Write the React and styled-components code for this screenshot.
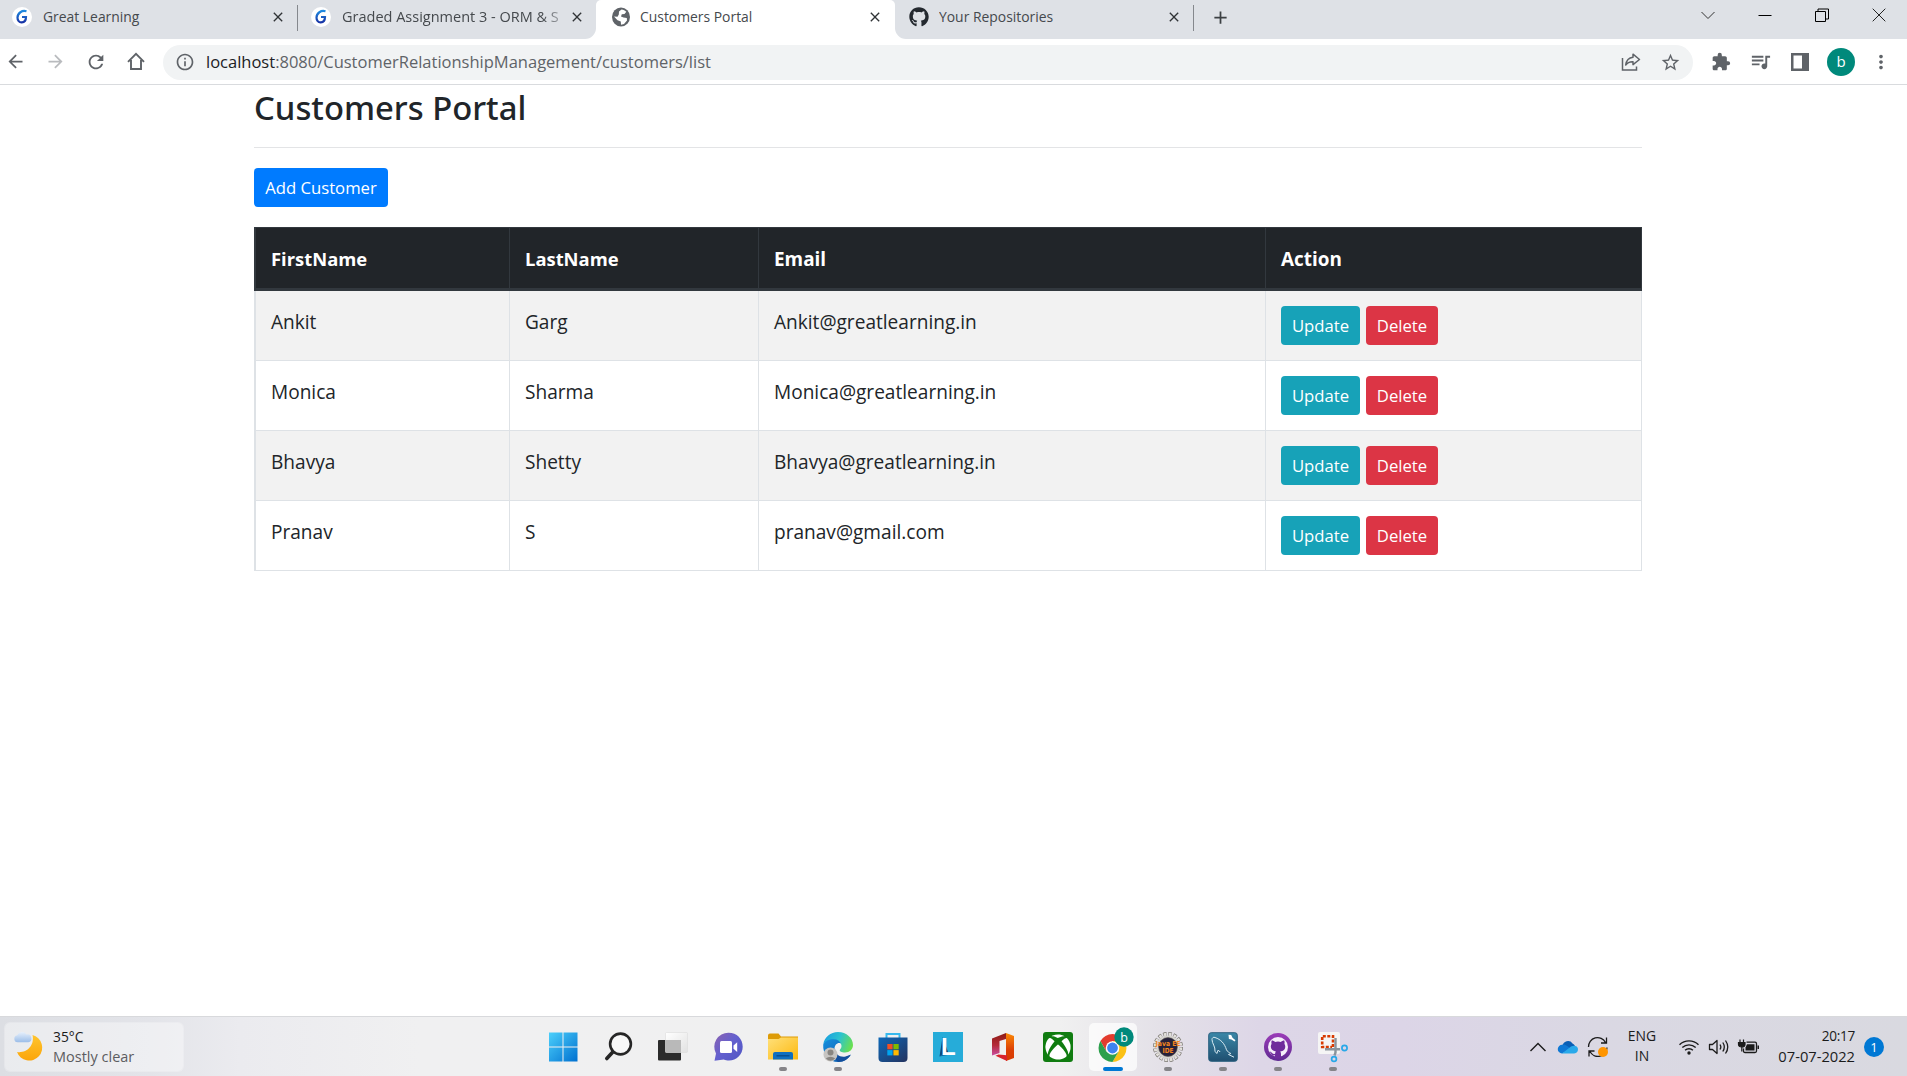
import React from "react";
import styled, { createGlobalStyle } from "styled-components";
import { FaGithub, FaXbox } from "react-icons/fa";
import {
  MdArrowBack, MdArrowForward, MdRefresh, MdInfoOutline, MdStarBorder,
  MdExtension, MdQueueMusic, MdMoreVert, MdClose, MdAdd, MdPublic,
} from "react-icons/md";

const Global = createGlobalStyle`
  * { box-sizing: border-box; }
  html, body { margin: 0; padding: 0; background: #fff; overflow: hidden; }
  body { font-family: "Open Sans", "Noto Sans", sans-serif; color: #212529; }
  svg { display: block; flex: none; overflow: visible; }
`;

const Screen = styled.div`
  width: 1907px;
  height: 1076px;
  display: flex;
  flex-direction: column;
`;

/* ---------- browser chrome ---------- */
const TabStrip = styled.div`
  height: 39px;
  display: flex;
  background: linear-gradient(#dee1e6 0 14px, #fff 14px);
`;
const TabsBefore = styled.div`
  width: 596px;
  display: flex;
  background: #dee1e6;
  border-bottom-right-radius: 11px;
`;
const TabsAfter = styled.div`
  flex: 1;
  display: flex;
  background: #dee1e6;
  border-bottom-left-radius: 11px;
`;
const Tab = styled.div`
  width: ${(p) => p.$w}px;
  height: 34px;
  padding-left: ${(p) => p.$pad}px;
  display: flex;
  align-items: center;
`;
const ActiveTab = styled(Tab)`
  height: 39px;
  padding-bottom: 5px;
  background: #fff;
  border-radius: 5px 5px 0 0;
`;
const Favicon = styled.span`
  width: 20px;
  height: 20px;
  margin-right: ${(p) => p.$gap || 10}px;
  border-radius: 50%;
  display: grid;
  place-items: center;
  background: ${(p) => p.$bg || "transparent"};
  color: ${(p) => p.$fg || "#3c4043"};
`;
const TabTitle = styled.span`
  flex: 1;
  min-width: 0;
  overflow: hidden;
  white-space: nowrap;
  font-size: ${(p) => p.$size || 13.9}px;
  line-height: 20px;
  color: #45494d;
  ${(p) => p.$fade && "mask-image: linear-gradient(90deg, #000 88%, transparent 101%);"}
`;
const TabClose = styled.span`
  width: 16px;
  margin-right: ${(p) => p.$right}px;
  color: #303336;
`;
const TabRule = styled.span`
  width: 1px;
  height: 26px;
  margin-top: 5px;
  background: #85888d;
`;
const NewTab = styled.span`
  margin: 7px 0 0 16px;
  color: #3c4043;
`;
const WindowControls = styled.div`
  margin-left: auto;
  margin-right: 21px;
  height: 29px;
  display: flex;
  align-items: center;
  gap: 43px;
`;

const Toolbar = styled.div`
  height: 46px;
  padding: 0 15px 0 5px;
  display: flex;
  align-items: center;
  border-bottom: 1px solid #d9dbde;
  color: #5f6368;
`;
const NavButtons = styled.div`
  width: 158px;
  display: flex;
  gap: 19px;
`;
const AddressBar = styled.div`
  width: 1530px;
  height: 35px;
  margin-top: 1px;
  padding: 0 12px;
  border-radius: 18px;
  background: #f1f3f4;
  display: flex;
  align-items: center;
`;
const Url = styled.span`
  flex: 1;
  margin-left: 11px;
  font-size: 16.5px;
  line-height: 24px;
  color: #5f6368;
`;
const Host = styled.span`
  color: #202124;
`;
const BarIcons = styled.div`
  display: flex;
  align-items: center;
  gap: 19px;
`;
const Extensions = styled.div`
  margin-left: auto;
  display: flex;
  align-items: center;
  gap: 18px;
`;
const Avatar = styled.span`
  width: 28px;
  height: 28px;
  margin: 0 -3px 0 -1px;
  border-radius: 50%;
  background: #00897b;
  color: #fff;
  font-size: 15px;
  line-height: 27px;
  text-align: center;
`;

/* ---------- portal page ---------- */
const Page = styled.main`
  flex: 1;
  width: 1388px;
  margin-left: 254px;
`;
const Title = styled.h2`
  margin: 2px 0 19px;
  font-family: "Noto Sans", sans-serif;
  font-size: 32.8px;
  line-height: 41px;
  font-weight: 500;
`;
const Rule = styled.hr`
  margin: 0 0 20px;
  border: 0;
  border-top: 1px solid #e3e4e6;
`;
const Button = styled.button`
  height: 39px;
  width: ${(p) => p.$w}px;
  padding: 1px 0 0;
  border: 0;
  border-radius: 4px;
  background: ${(p) => p.$bg};
  color: #fff;
  font-family: inherit;
  font-size: 16.7px;
  line-height: 26px;
`;
const Table = styled.div`
  margin-top: 20px;
  border-left: 2px solid #dee2e6;
  font-size: 19.08px;
  line-height: 32px;
`;
const Row = styled.div`
  height: 70px;
  display: grid;
  grid-template-columns: 254px 249px 507px 376px;
  background: ${(p) => (p.$odd ? "#f2f2f2" : "#fff")};
`;
const Cell = styled.div`
  padding: 15px;
  border-right: 1px solid #dee2e6;
  border-bottom: 1px solid #dee2e6;
  display: flex;
  gap: 6px;
`;
const HeadRow = styled(Row)`
  height: 64px;
  margin-left: -2px;
  border: solid #32383e;
  border-width: 1px 0 3px 2px;
  background: #212529;
`;
const HeadCell = styled(Cell)`
  border-right-color: #32383e;
  border-bottom: 0;
  color: #fff;
  font-weight: 700;
  font-size: ${(p) => p.$size || 18.4}px;
`;

/* ---------- taskbar ---------- */
const Taskbar = styled.footer`
  height: 60px;
  border-top: 1px solid #d8d9dc;
  display: flex;
  align-items: center;
  background: linear-gradient(90deg, #dcdee3 0, #e3e4e9 150px, #ebebef 240px, #f0f0f1 420px, #f0f0f0 1060px,
    #e4e1e8 1160px, #ddd6e7 1260px, #dcd5e7 1400px, #dad8e3 1600px, #d9d9e0 1907px);
`;
const Weather = styled.div`
  width: 178px;
  height: 48px;
  margin-left: 5px;
  padding-left: 8px;
  border-radius: 5px;
  background: rgba(255, 255, 255, 0.4);
  box-shadow: 0 0 0 1px rgba(255, 255, 255, 0.25);
  display: flex;
  align-items: center;
  gap: 10px;
`;
const WeatherText = styled.div`
  font-size: 14.5px;
  line-height: 20px;
  color: #5c5c60;
`;
const Degrees = styled.div`
  color: #1b1b1b;
  font-size: 13.8px;
`;
const Apps = styled.div`
  margin-left: 356px;
  display: flex;
  gap: 7px;
`;
const AppSlot = styled.div`
  width: 48px;
  height: 48px;
  border-radius: 5px;
  background: ${(p) => (p.$active ? "rgba(255,255,255,0.72)" : "transparent")};
  display: grid;
  place-items: center;
  position: relative;
  &::after {
    content: "";
    position: absolute;
    bottom: 0;
    left: 50%;
    transform: translateX(-50%);
    height: 4px;
    border-radius: 2px;
    width: ${(p) => (p.$active ? 20 : p.$open ? 8 : 0)}px;
    background: ${(p) => (p.$active ? "#0078d4" : "#858488")};
  }
`;
const Tray = styled.div`
  margin-left: auto;
  margin-right: 23px;
  display: flex;
  align-items: center;
  color: #1b1b1b;
`;
const TrayIcon = styled.span`
  margin-right: ${(p) => p.$gap}px;
`;
const TrayText = styled.div`
  width: ${(p) => p.$w}px;
  margin-right: ${(p) => p.$gap}px;
  text-align: ${(p) => p.$align};
  font-size: ${(p) => p.$size}px;
  line-height: 20px;
  padding-bottom: 1px;
`;
const Time = styled.div`
  font-size: 13.6px;
  letter-spacing: -0.3px;
`;
const Badge = styled.span`
  width: 20px;
  height: 20px;
  border-radius: 50%;
  background: #0078d4;
  color: #fff;
  font-size: 13px;
  line-height: 20px;
  text-align: center;
`;

/* ---------- drawings ---------- */
const LearningMark = () => (
  <svg width="12" height="16" viewBox="0 0 12 16" fill="none">
    <defs>
      <linearGradient id="gl" x1="0" y1="0" x2="0" y2="1">
        <stop offset="0" stopColor="#1f8ae0" />
        <stop offset="1" stopColor="#1733a6" />
      </linearGradient>
    </defs>
    <path d="M10.5 2.3C6 1 1.6 4 1.5 8.5c-.1 3 1.8 5 4.2 4.900C8.500 13.200 10 11 10 8H6" stroke="url(#gl)" strokeWidth="2.200" />
  </svg>
);
const GlobeIcon = () => (
  <svg width="18" height="20" viewBox="0 0 18 20">
    <ellipse cx="9" cy="10" rx="9" ry="9.500" fill="#5f6368" />
    <path d="M9.500 2.500c2 .2 3.600 1 4.800 2.300L12.500 7l-2.700.3L9 9.500l2.500 1 3.300.5.200 2.500-3 3.500-3 .8-.2-3.300-3.300-1.300L2 9.500l3.500.2 1.300-2.200L7 4.500z" fill="#fff" />
  </svg>
);
const HomeIcon = () => (
  <svg width="20" height="20" viewBox="0 0 20 20" fill="none" stroke="#5f6368" strokeWidth="1.9">
    <path d="M2 10.800 10 2.800l8 8M5 9v9h10V9" />
  </svg>
);
const ShareIcon = () => (
  <svg width="20" height="20" viewBox="0 0 20 20" fill="none" stroke="#5f6368" strokeWidth="1.500">
    <path d="M1.500 6v12h14v-3.500" />
    <path d="M12 2.200 18.500 7.500 12 12.600V9.800c-3.500-.2-5.500.8-7.300 3.200C5.300 8.600 7.600 5.700 12 5.200z" strokeLinejoin="round" />
  </svg>
);
const PanelIcon = () => (
  <svg width="20" height="20" viewBox="0 0 20 20">
    <path fill="#5f6368" fillRule="evenodd" d="M1 1h18v18H1zM3.500 3.500v13H12v-13z" />
  </svg>
);

const WeatherIcon = () => (
  <svg width="30" height="30" viewBox="0 0 30 30">
    <defs>
      <linearGradient id="moon" x1="0" y1="0" x2="0" y2="1">
        <stop offset="0" stopColor="#ffc52e" /><stop offset="1" stopColor="#fba50a" />
      </linearGradient>
      <linearGradient id="cloud" x1="0" y1="0" x2="0" y2="1">
        <stop offset="0" stopColor="#e6f0fc" /><stop offset="1" stopColor="#9bbde8" />
      </linearGradient>
    </defs>
    <path fill="url(#moon)" d="M19.500 3A13 13 0 1 1 4 20C13 21.500 22 14 19.500 3z" />
    <path fill="url(#cloud)" d="M4.500 10.300a3.600 3.600 0 0 1-.3-7.100A5.300 5.300 0 0 1 13.500 2.500a4 4 0 0 1 1.800 7.800z" />
  </svg>
);
const StartIcon = () => (
  <svg width="30" height="30" viewBox="0 0 30 30">
    <defs>
      <linearGradient id="win" x1="0" y1="0" x2="1" y2="1">
        <stop offset="0" stopColor="#4cd0fb" /><stop offset="1" stopColor="#0070d0" />
      </linearGradient>
    </defs>
    <path fill="url(#win)" d="M1 .5h13.500v14H1zM15.500.5H29.500v14h-14zM1 15.500h13.500v14H1zM15.500 15.500h14v14h-14z" />
  </svg>
);
const SearchIcon = () => (
  <svg width="30" height="30" viewBox="0 0 30 30" fill="none" stroke="#262626">
    <circle cx="17.500" cy="12" r="10.400" strokeWidth="2.600" fill="#f8f8f8" />
    <path d="M9.800 20 3.800 26.500" strokeWidth="3.600" strokeLinecap="round" />
  </svg>
);
const TaskViewIcon = () => (
  <svg width="30" height="30" viewBox="0 0 30 30">
    <defs>
      <linearGradient id="tv" x1="0" y1="0" x2="1" y2="1">
        <stop offset="0" stopColor="#fff" /><stop offset="1" stopColor="#e2e2e2" />
      </linearGradient>
    </defs>
    <rect x="0" y="8" width="23" height="20.500" rx="1" fill="#2b2b2b" />
    <rect x="7.500" y=".5" width="22" height="20" rx="1" fill="url(#tv)" stroke="#dcdcdc" strokeWidth=".6" />
    <path d="M7.500 8H23v12.500H7.500z" fill="#b9b9b9" />
  </svg>
);
const ChatIcon = () => (
  <svg width="30" height="30" viewBox="0 0 30 30">
    <defs>
      <linearGradient id="chat" x1="0" y1="0" x2="1" y2=".9">
        <stop offset="0" stopColor="#8c62b0" /><stop offset=".5" stopColor="#6360cf" /><stop offset="1" stopColor="#5257c4" />
      </linearGradient>
    </defs>
    <path fill="url(#chat)" d="M15.500.8C24 .8 29.700 7 29.700 14.800S23.500 28.500 16 28.500c-2 0-3.600-.3-5.200-1L1.500 28.700 3 21.500A14 14 0 0 1 15.500.8z" />
    <rect x="7" y="9" width="12" height="12" rx="1.500" fill="#fff" />
    <path d="m20.500 13.500 3.700-3.200v9.700l-3.700-3.200z" fill="#fff" />
  </svg>
);
const FolderIcon = () => (
  <svg width="30" height="30" viewBox="0 0 30 30">
    <defs>
      <linearGradient id="fold" x1="0" y1="0" x2="1" y2="1">
        <stop offset="0" stopColor="#ffe07a" /><stop offset="1" stopColor="#fdb90f" />
      </linearGradient>
    </defs>
    <path d="M0 3.500q0-2 2-2h8.500L13 4.500h17V12H0z" fill="#dd9b07" />
    <path d="M0 7h10.500L13 5.500h17v22H0z" fill="url(#fold)" />
    <path d="M5 27.500V22q0-2 2-2h16q2 0 2 2v5.500z" fill="#0f6fbf" />
    <path d="M8.500 23.800h13" stroke="#064a88" strokeWidth="1.300" />
  </svg>
);
const EdgeIcon = () => (
  <svg width="30" height="30" viewBox="0 0 30 30">
    <defs>
      <linearGradient id="e1" x1="0" y1=".3" x2="1" y2=".6">
        <stop offset="0" stopColor="#1a9fe0" /><stop offset=".5" stopColor="#2cc3cf" /><stop offset="1" stopColor="#6be04d" />
      </linearGradient>
      <linearGradient id="e2" x1="0" y1="0" x2="1" y2="1">
        <stop offset="0" stopColor="#1590df" /><stop offset="1" stopColor="#0d55a8" />
      </linearGradient>
    </defs>
    <path fill="url(#e1)" d="M.3 12C1.500 5 7.500 0 15 0c8.500 0 15 6 15 13 0 4.500-3.500 7.500-8 7.500-3.500 0-5.700-1.300-5.200-2.500.4-.9 1.700-1.700 1.700-4 0-3.300-3.700-6-8-6-4 0-7.600 1.500-10.200 4z" />
    <path fill="url(#e2)" d="M.2 12.500C2 9 6 7.200 10.500 7.200c4 0 6.500 2 7.500 4.300-3-1.400-6.500.8-6.500 5.500 0 5.500 5 9.500 10.500 8.500l5.800-2.700C25 27.500 20.500 30 15 30 6.500 30-.5 22.500.2 12.500z" />
    <path fill="#124f9d" d="M12 17c0 5 5 8.800 10.500 7.500 2-.4 4-1.300 5.300-2-2.300 4.500-7 7.500-12.300 7.500-4-2.500-6-7.500-3.500-13z" />
    <circle cx="7.500" cy="22.500" r="7" fill="#c6c4c1" />
    <circle cx="7.500" cy="20.500" r="3" fill="#888581" />
    <path d="M2.800 26.300q4.700-3 9.400 0-4.700 5-9.400 0z" fill="#888581" />
  </svg>
);
const StoreIcon = () => (
  <svg width="30" height="30" viewBox="0 0 30 30">
    <defs>
      <linearGradient id="st" x1="0" y1="0" x2="1" y2="1">
        <stop offset="0" stopColor="#0d68b8" /><stop offset="1" stopColor="#24335f" />
      </linearGradient>
    </defs>
    <path d="M8.500 6V2h13v4" fill="none" stroke="#36b9ee" strokeWidth="2" />
    <path d="M.5 5.500h29V26q0 4-4 4h-21q-4 0-4-4z" fill="url(#st)" />
    <path d="M9.300 12h5.300v5.300H9.300z" fill="#f25022" />
    <path d="M15.400 12h5.300v5.300h-5.300z" fill="#7fba00" />
    <path d="M9.300 18.100h5.300v5.300H9.300z" fill="#00a4ef" />
    <path d="M15.400 18.100h5.300v5.300h-5.300z" fill="#ffb900" />
  </svg>
);
const LIcon = () => (
  <svg width="30" height="30" viewBox="0 0 30 30">
    <path d="M0 0h30v30H0z" fill="#26acd9" />
    <path d="M9.500 5 6.500 24.500 10 22.500h6z" fill="#0c4a80" />
    <path d="M6.500 24.500 9.500 22H20z" fill="#0d6ba5" />
    <text x="8" y="22.500" fontFamily="Liberation Sans" fontWeight="700" fontSize="24" fill="#fff">L</text>
  </svg>
);
const OfficeIcon = () => (
  <svg width="30" height="30" viewBox="0 0 30 30">
    <defs>
      <linearGradient id="o1" x1="0" y1="0" x2="0" y2="1">
        <stop offset="0" stopColor="#8c1a12" /><stop offset=".55" stopColor="#b52a3a" /><stop offset="1" stopColor="#c94fa0" />
      </linearGradient>
      <linearGradient id="o2" x1="0" y1="0" x2="0" y2="1">
        <stop offset="0" stopColor="#fb8a06" /><stop offset=".6" stopColor="#dc4005" /><stop offset="1" stopColor="#d83b01" />
      </linearGradient>
    </defs>
    <path d="m4 6.500 14-5.500v6l-6.500 2v12L4 23.500z" fill="url(#o1)" />
    <path d="M18 1l8 3v22l-8 3z" fill="url(#o2)" />
    <path d="m7.500 23.700 3-1.200 8.500.7V29z" fill="#d8232c" />
  </svg>
);
const XboxTile = styled.span`
  width: 30px;
  height: 30px;
  border-radius: 3px;
  background: #107c10;
  color: #fff;
  display: grid;
  place-items: center;
`;
const ChromeIcon = () => (
  <svg width="36" height="36" viewBox="0 0 36 36">
    <g transform="translate(17.500 19)">
      <path d="M-12.100-7A14 14 0 0 1 12.100-7L0-7-6.100 3.500z" fill="#e33b2e" />
      <path d="M12.100-7A14 14 0 0 1 0 14L6.100 3.500 0-7z" fill="#fbc116" />
      <path d="M0 14A14 14 0 0 1-12.100-7L-6.100 3.500 6.100 3.500z" fill="#2da04c" />
      <circle r="6.800" fill="#fff" />
      <circle r="5.400" fill="#3d83f0" />
    </g>
    <circle cx="29" cy="8" r="9.700" fill="#00897b" />
    <text x="29" y="12.500" textAnchor="middle" fontFamily="Open Sans" fontSize="12.500" fill="#fff">b</text>
  </svg>
);
const EclipseIcon = () => (
  <svg width="30" height="30" viewBox="0 0 30 30">
    <circle cx="15" cy="15" r="13" fill="none" stroke="#77746f" strokeWidth="4" strokeDasharray="3.400 1.700" />
    <circle cx="15" cy="15" r="12.800" fill="none" stroke="#e3e1dc" strokeWidth="3" strokeDasharray="2.600 2.430" strokeDashoffset="-.4" />
    <circle cx="15" cy="15" r="11.500" fill="#d6d4cf" />
    <circle cx="15" cy="15" r="9.400" fill="#26213a" stroke="#55514c" strokeWidth=".6" />
    <g fontFamily="DejaVu Sans" fontWeight="700" fill="#f5861f" textAnchor="middle">
      <text x="15" y="14" fontSize="7" textLength="25" lengthAdjust="spacingAndGlyphs">Java EE</text>
      <text x="15" y="20.800" fontSize="7" textLength="11" lengthAdjust="spacingAndGlyphs">IDE</text>
    </g>
  </svg>
);
const MySqlIcon = () => (
  <svg width="30" height="30" viewBox="0 0 30 30">
    <defs>
      <linearGradient id="my" x1="0" y1="0" x2="0" y2="1">
        <stop offset="0" stopColor="#3b88a8" /><stop offset="1" stopColor="#1f4f70" />
      </linearGradient>
    </defs>
    <rect x=".7" y=".7" width="28.600" height="28.600" rx="2.500" fill="url(#my)" stroke="#2a607f" />
    <path d="M8.800 21.500 7 19.300C7.500 14.500 4 11.500 4 7.500c0-1.800 1.500-2.700 3-2 6 2 9.500 6 11.500 12.300.6 1.700 2.500 2.500 4.300 3.700l-2.300 1 5.500 2.700M8.800 21.500l1.400-3.500 2 2" fill="none" stroke="#d9eaf2" strokeWidth="1" strokeLinejoin="round" />
    <path d="m20.500 2.700 2.700.4 1.300 2.700 3 2.400-1 1.400-3-2-2.600-.6" fill="#fff" />
  </svg>
);
const DesktopCat = () => (
  <svg width="30" height="30" viewBox="0 0 30 30">
    <defs>
      <linearGradient id="gh" x1="0" y1="0" x2="0" y2="1">
        <stop offset="0" stopColor="#9b3cb8" /><stop offset="1" stopColor="#5f2a92" />
      </linearGradient>
    </defs>
    <circle cx="15" cy="15" r="14" fill="url(#gh)" />
    <circle cx="15" cy="15" r="10" fill="#f5effa" />
    <path fill="#6f2c9c" d="M8.700 8.600c1.500 0 2.500.6 3.300 1.300q3-.7 6 0c.8-.7 1.800-1.300 3.300-1.300.4 1.200.4 2.200.1 3.200 2 3.200.6 7.300-4.200 7.700.8 1 .8 2 .8 3v4h-6v-3.200c-2.500.5-3.600-.6-4.200-2-.3-.7-.7-1-1.200-1.400 1.700-.3 2.200 1 3 1.700.7.600 1.600.5 2.500.2 0-.8.300-1.700.800-2.300-4.700-.4-6.200-4.500-4.300-7.700-.3-1-.3-2 .1-3.200z" />
  </svg>
);
const SnipIcon = () => (
  <svg width="30" height="30" viewBox="0 0 30 30">
    <rect x="0" y="0" width="22" height="22" rx="2" fill="#f5f5f5" />
    <path d="M15 15V4.200H4.200V15H14" fill="none" stroke="#d83b01" strokeWidth="2.600" strokeDasharray="3 1.500" />
    <path d="M17.500 6v14.500l-1 3M7 17.300h15" fill="none" stroke="#8b949c" strokeWidth="2.400" />
    <circle cx="26.500" cy="16" r="2.600" fill="none" stroke="#29a8e8" strokeWidth="1.700" />
    <circle cx="16" cy="27" r="2.400" fill="none" stroke="#29a8e8" strokeWidth="1.700" />
  </svg>
);

const ChevronUp = () => (
  <svg width="18" height="12" viewBox="0 0 18 12" fill="none" stroke="#1b1b1b" strokeWidth="1.400">
    <path d="M1.500 10 9 2.500 16.500 10" />
  </svg>
);
const OneDrive = () => (
  <svg width="20" height="14" viewBox="0 0 20 14">
    <path d="M4.500 6A5.500 5.500 0 0 1 14.500 3.500 5 5 0 0 1 17 6L9 10z" fill="#0a5fb5" />
    <path d="M4.300 4.700C6.500 4.300 8 5 13 9l-9 4.500A4.400 4.400 0 0 1 4.300 4.700z" fill="#0f78d4" />
    <path d="M4 13.500 13 6.500c5.500-2.300 8 1.500 6.700 4.500-.6 1.600-2 2.500-3.700 2.500z" fill="#29a9ea" />
  </svg>
);
const SyncIcon = () => (
  <svg width="22" height="22" viewBox="0 0 22 22" fill="none" stroke="#1b1b1b" strokeWidth="1.300">
    <path d="M1.500 11A9 9 0 0 1 18.500 6.500M19.500 1.500V7H14M20 11.500A9 9 0 0 1 3 15.500M2 20.500V15h5.500" />
    <circle cx="16" cy="16" r="5" fill="#ff9500" stroke="none" />
  </svg>
);
const Wifi = () => (
  <svg width="22" height="18" viewBox="0 0 22 18" fill="none" stroke="#1b1b1b" strokeWidth="1.400">
    <path d="M1.500 6.800a13.500 13.500 0 0 1 19 0M4.300 9.600a9.500 9.500 0 0 1 13.400 0M7.100 12.300a5.500 5.500 0 0 1 7.800 0" />
    <circle cx="11" cy="15" r="1.700" fill="#1b1b1b" stroke="none" />
  </svg>
);
const Volume = () => (
  <svg width="22" height="18" viewBox="0 0 22 18" fill="none" stroke="#1b1b1b" strokeWidth="1.300" strokeLinejoin="round">
    <path d="M1.500 6.500h3L9 2.500v13l-4.500-4h-3z" />
    <path d="M12 6.500q1.700 2.500 0 5M14.800 4.500q3 4.500 0 9M17.500 2.500q4.500 6.500 0 13" />
  </svg>
);
const Battery = () => (
  <svg width="22" height="18" viewBox="0 0 22 18">
    <path d="M2 1.500v3M5.500 1.500v3M.5 4.500h6.500v2Q7 9 3.800 9 .5 9 .5 6.500zM3.800 9v4.500" fill="#1b1b1b" stroke="#1b1b1b" strokeWidth="1.200" />
    <path d="M8.500 4.200H17q1.500 0 1.500 1.500V13q0 1.500-1.500 1.500H7Q5.500 14.500 5.500 13v-2.500" fill="none" stroke="#1b1b1b" strokeWidth="1.300" />
    <path d="M9 6.200h7.500v6.300H7.500V9.500z" fill="#1b1b1b" />
    <path d="M19.500 7.500h1.500v3.500h-1.500z" fill="#1b1b1b" />
  </svg>
);

/* ---------- data ---------- */
const customers = [
  ["Ankit", "Garg", "Ankit@greatlearning.in"],
  ["Monica", "Sharma", "Monica@greatlearning.in"],
  ["Bhavya", "Shetty", "Bhavya@greatlearning.in"],
  ["Pranav", "S", "pranav@gmail.com"],
];
const apps = [
  { id: "start", icon: <StartIcon /> },
  { id: "search", icon: <SearchIcon /> },
  { id: "views", icon: <TaskViewIcon /> },
  { id: "chat", icon: <ChatIcon /> },
  { id: "files", icon: <FolderIcon />, open: true },
  { id: "edge", icon: <EdgeIcon />, open: true },
  { id: "store", icon: <StoreIcon /> },
  { id: "l", icon: <LIcon /> },
  { id: "office", icon: <OfficeIcon /> },
  { id: "xbox", icon: <XboxTile><FaXbox size={26} /></XboxTile> },
  { id: "chrome", icon: <ChromeIcon />, active: true },
  { id: "eclipse", icon: <EclipseIcon />, open: true },
  { id: "mysql", icon: <MySqlIcon />, open: true },
  { id: "github", icon: <DesktopCat />, open: true },
  { id: "snip", icon: <SnipIcon />, open: true },
];

export default function App() {
  return (
    <Screen>
      <Global />
      <TabStrip>
        <TabsBefore>
          <Tab $w={297} $pad={12}>
            <Favicon $bg="#fff" $gap={11}><LearningMark /></Favicon>
            <TabTitle>Great Learning</TabTitle>
            <TabClose $right={11}><MdClose size={16} /></TabClose>
          </Tab>
          <TabRule />
          <Tab $w={298} $pad={13}>
            <Favicon $bg="#fff" $gap={11}><LearningMark /></Favicon>
            <TabTitle $size={14.5} $fade>Graded Assignment 3 - ORM &amp; S</TabTitle>
            <TabClose $right={11}><MdClose size={16} /></TabClose>
          </Tab>
        </TabsBefore>
        <ActiveTab $w={299} $pad={15}>
          <Favicon $gap={9}><GlobeIcon /></Favicon>
          <TabTitle>Customers Portal</TabTitle>
          <TabClose $right={12}><MdClose size={16} /></TabClose>
        </ActiveTab>
        <TabsAfter>
          <Tab $w={298} $pad={14}>
            <Favicon $fg="#24292f"><FaGithub size={20} /></Favicon>
            <TabTitle>Your Repositories</TabTitle>
            <TabClose $right={11}><MdClose size={16} /></TabClose>
          </Tab>
          <TabRule />
          <NewTab><MdAdd size={21} /></NewTab>
          <WindowControls>
            <svg width="14" height="14" viewBox="0 0 14 14" fill="none" stroke="#333"><path d="m.5 4 6.500 6.500L13.500 4" /></svg>
            <svg width="14" height="14" viewBox="0 0 14 14" fill="none" stroke="#000"><path d="M.5 7.500h13" /></svg>
            <svg width="14" height="14" viewBox="0 0 14 14" fill="none" stroke="#000"><path d="M.5 3.500h10v10H.5zM3 3.500v-2.500h10.500v10h-2.500" /></svg>
            <svg width="14" height="14" viewBox="0 0 14 14" fill="none" stroke="#222"><path d="m.7.700 12.600 12.600M13.300.700.7 13.300" /></svg>
          </WindowControls>
        </TabsAfter>
      </TabStrip>

      <Toolbar>
        <NavButtons>
          <MdArrowBack size={21} />
          <MdArrowForward size={21} color="#b9bbbe" />
          <MdRefresh size={22} />
          <HomeIcon />
        </NavButtons>
        <AddressBar>
          <MdInfoOutline size={20} />
          <Url><Host>localhost</Host>:8080/CustomerRelationshipManagement/customers/list</Url>
          <BarIcons>
            <ShareIcon />
            <MdStarBorder size={21} />
          </BarIcons>
        </AddressBar>
        <Extensions>
          <MdExtension size={20} />
          <MdQueueMusic size={23} />
          <PanelIcon />
          <Avatar>b</Avatar>
          <MdMoreVert size={22} />
        </Extensions>
      </Toolbar>

      <Page>
        <Title>Customers Portal</Title>
        <Rule />
        <Button $w={134} $bg="#007bff">Add Customer</Button>
        <Table>
          <HeadRow>
            <HeadCell>FirstName</HeadCell>
            <HeadCell>LastName</HeadCell>
            <HeadCell $size={18.9}>Email</HeadCell>
            <HeadCell $size={18.9}>Action</HeadCell>
          </HeadRow>
          {customers.map(([first, last, email], i) => (
            <Row key={email} $odd={i % 2 === 0}>
              <Cell>{first}</Cell>
              <Cell>{last}</Cell>
              <Cell>{email}</Cell>
              <Cell>
                <Button $w={79} $bg="#17a2b8">Update</Button>
                <Button $w={72} $bg="#dc3545">Delete</Button>
              </Cell>
            </Row>
          ))}
        </Table>
      </Page>

      <Taskbar>
        <Weather>
          <WeatherIcon />
          <WeatherText>
            <Degrees>35°C</Degrees>
            Mostly clear
          </WeatherText>
        </Weather>
        <Apps>
          {apps.map((a) => (
            <AppSlot key={a.id} $open={a.open} $active={a.active}>{a.icon}</AppSlot>
          ))}
        </Apps>
        <Tray>
          <TrayIcon $gap={11}><ChevronUp /></TrayIcon>
          <TrayIcon $gap={9}><OneDrive /></TrayIcon>
          <TrayIcon $gap={17}><SyncIcon /></TrayIcon>
          <TrayText $w={32} $gap={20} $align="center" $size={13.9}>ENG<br />IN</TrayText>
          <TrayIcon $gap={8}><Wifi /></TrayIcon>
          <TrayIcon $gap={8}><Volume /></TrayIcon>
          <TrayIcon $gap={15}><Battery /></TrayIcon>
          <TrayText $w={80} $gap={9} $align="right" $size={14.7}>
            <Time>20:17</Time>
            07-07-2022
          </TrayText>
          <Badge>1</Badge>
        </Tray>
      </Taskbar>
    </Screen>
  );
}
